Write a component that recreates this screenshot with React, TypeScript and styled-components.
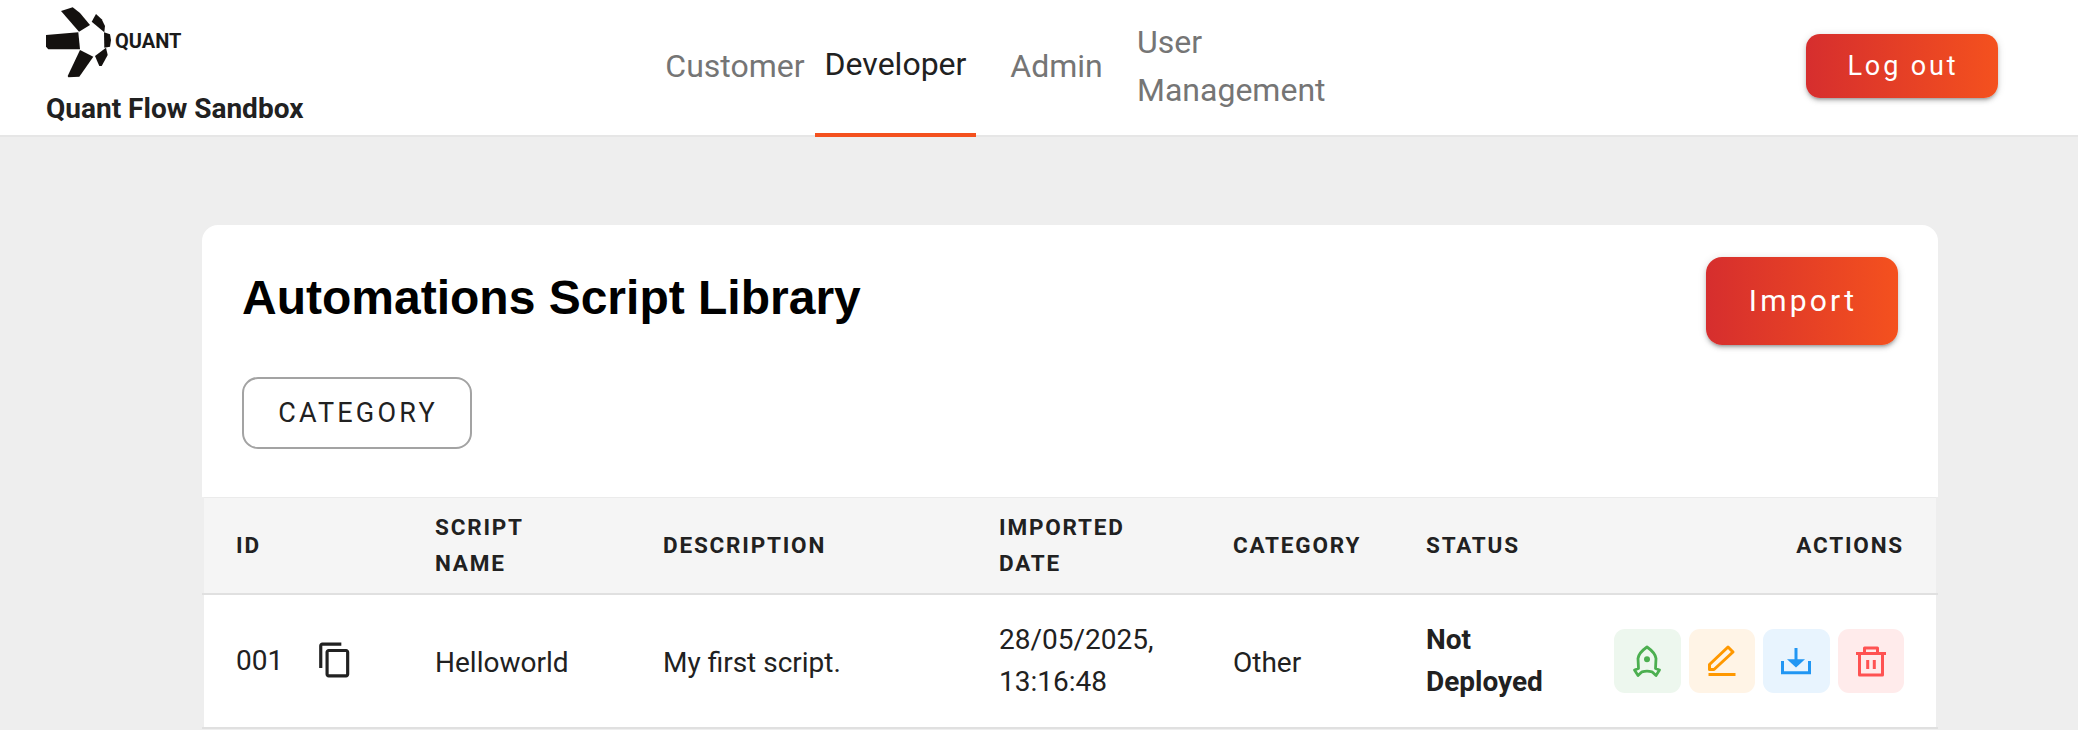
import React from 'react'
import styled, { createGlobalStyle } from 'styled-components'

const GlobalStyle = createGlobalStyle`
  html, body {
    margin: 0;
    padding: 0;
    background: #eeeeee;
    font-family: Roboto, 'Liberation Sans', sans-serif;
    color: #212121;
    overflow: hidden;
  }
  * { box-sizing: border-box; }
`

const Page = styled.div`
  width: 2078px;
  height: 730px;
  overflow: hidden;
`

const Header = styled.header`
  height: 137px;
  display: flex;
  align-items: stretch;
  padding: 0 80px 0 46px;
  background: #ffffff;
  border-bottom: 2px solid #e6e6e6;
`

const Brand = styled.div`
  width: 609px;
  flex: none;
  display: flex;
  flex-direction: column;
  padding-top: 7px;
`

const LogoRow = styled.div`
  display: flex;
  align-items: center;
  height: 72px;
`

const LogoText = styled.span`
  margin: -4px 0 0 3px;
  font-size: 20px;
  font-weight: 700;
  color: #1a1a1a;
`

const BrandName = styled.div`
  margin-top: 14px;
  font-size: 28px;
  font-weight: 700;
  line-height: 32px;
  color: #212121;
`

const Nav = styled.nav`
  display: flex;
  flex: 1;
  align-items: stretch;
  height: 137px;
`

const Tab = styled.a<{ $active?: boolean; $width: number; $left?: boolean }>`
  position: relative;
  display: flex;
  align-items: center;
  justify-content: ${(p) => (p.$left ? 'flex-start' : 'center')};
  width: ${(p) => p.$width}px;
  padding: ${(p) => (p.$active ? '0 0 9px' : '0 0 5px')};
  font-size: 32px;
  line-height: 48px;
  color: ${(p) => (p.$active ? '#212121' : '#757575')};
  ${(p) =>
    p.$active &&
    `&::after {
      content: '';
      position: absolute;
      left: 0;
      right: 0;
      bottom: 0;
      height: 4px;
      background: #f4511e;
    }`}
`

const GradientButton = styled.button<{ $tall?: boolean }>`
  flex: none;
  width: 192px;
  height: ${(p) => (p.$tall ? 88 : 64)}px;
  padding: 0 0 ${(p) => (p.$tall ? 1 : 0)}px 2px;
  border: 0;
  border-radius: ${(p) => (p.$tall ? 16 : 14)}px;
  background: linear-gradient(90deg, #d62e2e, #f4511e);
  color: #ffffff;
  font-family: Roboto, sans-serif;
  font-size: ${(p) => (p.$tall ? 30 : 27)}px;
  font-weight: 400;
  letter-spacing: ${(p) => (p.$tall ? 3.2 : 2.9)}px;
  box-shadow: 0 3px 3px -2px rgba(0, 0, 0, 0.25), 0 3px 4px 0 rgba(0, 0, 0, 0.16), 0 1px 8px 0 rgba(0, 0, 0, 0.12);
`

const LogoutSlot = styled.div`
  padding-top: 34px;
`

const Main = styled.main`
  padding: 88px 140px 0 202px;
`

const Card = styled.section`
  width: 1736px;
  border-radius: 16px 16px 0 0;
  background: #ffffff;
`

const CardHead = styled.div`
  padding: 32px 40px 48px;
`

const TitleRow = styled.div`
  display: flex;
  justify-content: space-between;
  align-items: flex-start;
  margin-bottom: 32px;
`

const Title = styled.h1`
  margin: 13px 0 0;
  font-family: 'Liberation Sans', Arial, sans-serif;
  font-size: 48px;
  font-weight: 700;
  line-height: 56px;
  color: #000000;
`

const FilterButton = styled.button`
  display: block;
  width: 230px;
  height: 72px;
  padding: 0 0 1px 2px;
  border: 2px solid #a3a3a3;
  border-radius: 16px;
  background: #ffffff;
  color: #212121;
  font-family: Roboto, sans-serif;
  font-size: 27px;
  letter-spacing: 3.2px;
`

const Table = styled.table`
  width: 100%;
  table-layout: fixed;
  border-collapse: collapse;
  border-left: 2px solid #eeeeee;
  border-right: 2px solid #eeeeee;
`

const Col = styled.col<{ $w: number }>`
  width: ${(p) => p.$w}px;
`

const HeadRow = styled.tr`
  height: 96px;
  background: #f5f5f5;
  border-top: 1px solid #ebebeb;
  border-bottom: 2px solid #e0e0e0;
`

const Th = styled.th<{ $right?: boolean }>`
  padding: 0 32px;
  font-size: 22.5px;
  font-weight: 700;
  line-height: 36px;
  letter-spacing: 1.8px;
  text-align: ${(p) => (p.$right ? 'right' : 'left')};
  color: #212121;
`

const BodyRow = styled.tr`
  height: 134px;
  border-bottom: 2px solid #e0e0e0;
`

const Td = styled.td<{ $bold?: boolean; $low?: boolean }>`
  padding: ${(p) => (p.$low ? '5px' : '0')} 32px 0;
  font-size: 28px;
  font-weight: ${(p) => (p.$bold ? 700 : 400)};
  line-height: 42px;
  color: #212121;
`

const IdCell = styled.div`
  display: flex;
  align-items: center;
  gap: 33px;

  svg {
    margin-top: -2px;
  }
`

const ActionRow = styled.div`
  display: flex;
  justify-content: flex-end;
  gap: 8px;
`

const ActionButton = styled.button<{ $bg: string }>`
  display: flex;
  align-items: center;
  justify-content: center;
  width: 67px;
  height: 64px;
  padding: 0;
  border: 0;
  border-radius: 11px;
  background: ${(p) => p.$bg};
`

const Logo = () => (
  <svg width="66" height="72" viewBox="0 0 66 72" fill="#14110f">
    <path d="M15 4 L26.7 0.3 L34 6 L44 18 L33 24.7 Z" />
    <path d="M45.7 14.7 L50 7 L55.7 12.3 L59 19 L58.3 25.3 Z" />
    <path d="M58 25.3 L64 27.3 L65 33 L64 39.7 L58.3 40.7 Z" />
    <path d="M49 49 L60 40.7 L61.7 48 L55.7 59 L53.3 59 Z" />
    <path d="M34 43 L47.3 49.7 L33.3 69.7 L22.3 70.3 L21.7 69 Z" />
    <path d="M0 28 L32.3 25.3 L34 42.3 L2.3 42.3 L0 39.7 Z" />
  </svg>
)

const CopyIcon = () => (
  <svg width="38" height="38" viewBox="0 0 24 24" fill="#212121">
    <path d="M16 1H4c-1.1 0-2 .9-2 2v14h2V3h12V1zm3 4H8c-1.1 0-2 .9-2 2v14c0 1.1.9 2 2 2h11c1.1 0 2-.9 2-2V7c0-1.1-.9-2-2-2zm0 16H8V7h11v14z" />
  </svg>
)

const RocketIcon = () => (
  <svg width="40" height="40" viewBox="0 0 40 40" fill="none" stroke="#4caf50" strokeWidth="2.8" strokeLinejoin="round">
    <path d="M20 6 C15 9.5 11.5 13 11 17.5 L11.5 27.5 L7.5 29 L11 34.5 L15 30.8 C18 30 22 30 25 30.8 L29 34.5 L32.5 29 L28.5 27.5 L29 17.5 C28.5 13 25 9.5 20 6 Z" />
    <circle cx="20" cy="18.3" r="3" fill="#4caf50" stroke="none" />
  </svg>
)

const EditIcon = () => (
  <svg width="40" height="40" viewBox="0 0 40 40" fill="none" stroke="#ff9800" strokeWidth="3" strokeLinejoin="round">
    <path d="M26 6 L31 11 L12 28.5 L7.5 28.5 L7.5 23.5 Z" />
    <path d="M6.5 33.5 H33.5" />
  </svg>
)

const DownloadIcon = () => (
  <svg width="40" height="40" viewBox="0 0 40 40" fill="none" stroke="#2196f3" strokeWidth="3">
    <path d="M20 7 V20" />
    <path d="M11 18.3 H29 L20 26.5 Z" fill="#2196f3" stroke="none" />
    <path d="M6.5 20 V31.8 H33.5 V20" />
  </svg>
)

const DeleteIcon = () => (
  <svg width="40" height="40" viewBox="0 0 40 40" fill="none" stroke="#ff5252" strokeWidth="3" strokeLinejoin="round">
    <path d="M13.5 12 V7 H26.5 V12" />
    <path d="M5 12.5 H35" />
    <path d="M8.5 12.5 V34 H31.5 V12.5" />
    <path d="M16.7 19 V28 M23.3 19 V28" />
  </svg>
)

export default function App() {
  return (
    <Page>
      <GlobalStyle />
      <Header>
        <Brand>
          <LogoRow>
            <Logo />
            <LogoText>QUANT</LogoText>
          </LogoRow>
          <BrandName>Quant Flow Sandbox</BrandName>
        </Brand>
        <Nav>
          <Tab $width={160}>Customer</Tab>
          <Tab $width={161} $active>Developer</Tab>
          <Tab $width={161}>Admin</Tab>
          <Tab $width={200} $left>User<br />Management</Tab>
        </Nav>
        <LogoutSlot>
          <GradientButton>Log out</GradientButton>
        </LogoutSlot>
      </Header>
      <Main>
        <Card>
          <CardHead>
            <TitleRow>
              <Title>Automations Script Library</Title>
              <GradientButton $tall>Import</GradientButton>
            </TitleRow>
            <FilterButton>CATEGORY</FilterButton>
          </CardHead>
          <Table>
            <colgroup>
              <Col $w={200} />
              <Col $w={228} />
              <Col $w={336} />
              <Col $w={234} />
              <Col $w={193} />
              <Col $w={188} />
              <Col $w={355} />
            </colgroup>
            <thead>
              <HeadRow>
                <Th>ID</Th>
                <Th>SCRIPT<br />NAME</Th>
                <Th>DESCRIPTION</Th>
                <Th>IMPORTED DATE</Th>
                <Th>CATEGORY</Th>
                <Th>STATUS</Th>
                <Th $right>ACTIONS</Th>
              </HeadRow>
            </thead>
            <tbody>
              <BodyRow>
                <Td>
                  <IdCell>
                    001
                    <CopyIcon />
                  </IdCell>
                </Td>
                <Td $low>Helloworld</Td>
                <Td $low>My first script.</Td>
                <Td>28/05/2025, 13:16:48</Td>
                <Td $low>Other</Td>
                <Td $bold>Not Deployed</Td>
                <Td>
                  <ActionRow>
                    <ActionButton $bg="#edf7ee"><RocketIcon /></ActionButton>
                    <ActionButton $bg="#fff4e6"><EditIcon /></ActionButton>
                    <ActionButton $bg="#e8f4fe"><DownloadIcon /></ActionButton>
                    <ActionButton $bg="#ffebeb"><DeleteIcon /></ActionButton>
                  </ActionRow>
                </Td>
              </BodyRow>
            </tbody>
          </Table>
        </Card>
      </Main>
    </Page>
  )
}
